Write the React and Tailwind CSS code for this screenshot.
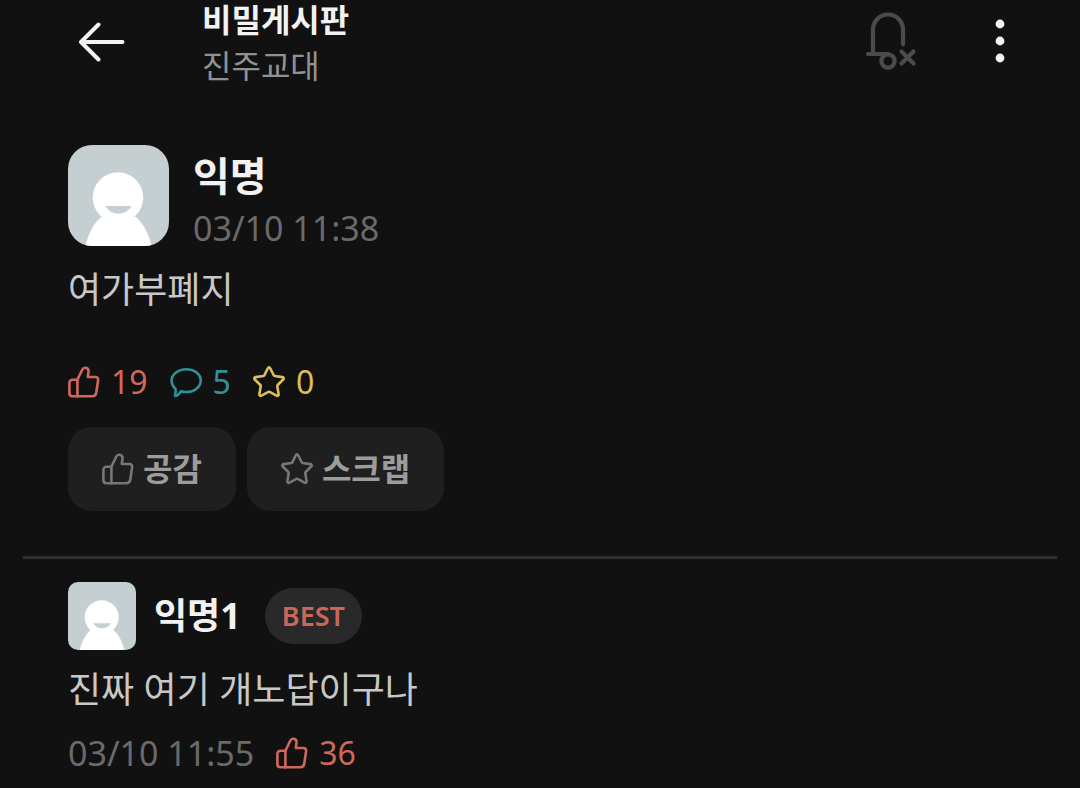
import React, { useState } from 'react';
import clsx from 'clsx';

const ThumbIcon = ({ className }) => (
  <svg viewBox="0 0 32 32" className={clsx('w-8 h-8', className)} fill="none" stroke="currentColor" strokeWidth="2.6" strokeLinejoin="round" strokeLinecap="round" aria-hidden="true">
    <path d="M9.4 13.8H4.6C2.6 13.8 1.4 15 1.4 16.8v10.4c0 1.8 1.2 3 3.2 3h4.8" />
    <path d="M9.4 13.8v16.4" />
    <path d="M9.4 13.8l4.8-10c.8-1.6 2-2.3 3.6-2 1.9.4 2.9 1.9 2.7 3.9l-.7 5.300h7.500c2 0 3.100 1.300 2.800 3.200l-1.800 12.300c-.3 2.300-1.600 3.700-4 3.700H9.400" />
  </svg>
);

const BubbleIcon = ({ className }) => (
  <svg viewBox="0 0 32 32" className={clsx('w-8 h-8', className)} fill="none" stroke="currentColor" strokeWidth="2.6" strokeLinejoin="round" aria-hidden="true">
    <path d="M16.4 3.2c8 0 14.3 4.9 14.3 11.3s-6.300 11.500-14.300 11.500c-1.900 0-3.600-.2-5.200-.8-1.500 2.500-3.500 4.300-5.400 4.700-.9.200-1.100-.5-.8-1.200.6-1.600.9-4 .5-5.900-2.300-2-3.900-4.900-3.900-8.300 0-6.400 6.800-11.300 14.800-11.300z" />
  </svg>
);

const StarIcon = ({ className }) => (
  <svg viewBox="0 0 32 32" className={clsx('w-8 h-8', className)} fill="none" stroke="currentColor" strokeWidth="2.6" strokeLinejoin="round" aria-hidden="true">
    <path d="M14.8 2.2c.5-1.1 1.9-1.1 2.4 0l3.500 7.100c.2.400.6.7 1 .7l7.700 1.100c1.300.2 1.700 1.500.8 2.400l-5.500 5.500c-.3.300-.4.700-.4 1.200l1.300 8c.2 1.200-1 2-2.100 1.400l-6.800-3.700c-.4-.2-.9-.2-1.300 0l-6.900 3.700c-1.100.6-2.300-.2-2.100-1.400l1.300-8c.1-.5-.1-.9-.4-1.200l-5.500-5.500c-.9-.9-.5-2.200.8-2.400l7.700-1.100c.4-.1.800-.3 1-.7z" />
  </svg>
);

const BackIcon = () => (
  <svg viewBox="0 0 48 40" className="w-12 h-10" fill="none" stroke="currentColor" strokeWidth="4" strokeLinecap="round" strokeLinejoin="round" aria-hidden="true">
    <path d="M20.5 2.5L3 20l17.5 17.5M3 20h41.5" />
  </svg>
);

const BellOffIcon = () => (
  <svg viewBox="0 0 52 58" className="w-[52px] h-[58px]" fill="none" stroke="currentColor" strokeWidth="4.2" strokeLinecap="round" aria-hidden="true">
    <path d="M8 42V17.5a15 15 0 0 1 30 0v15" />
    <path d="M3 42h20" />
    <circle cx="23" cy="49" r="6.6" />
    <path d="M36.5 39.5l12 12M48.5 39.5l-12 12" />
  </svg>
);

const MoreIcon = () => (
  <svg viewBox="0 0 10 44" className="w-[10px] h-11" fill="currentColor" aria-hidden="true">
    <circle cx="5" cy="5" r="4.4" />
    <circle cx="5" cy="22" r="4.4" />
    <circle cx="5" cy="39" r="4.4" />
  </svg>
);

const Avatar = ({ className }) => (
  <svg viewBox="0 0 100 100" className={clsx('shrink-0 bg-[#c5cfd2]', className)} aria-hidden="true">
    <path d="M17 101c3-13 8-23 16-30h34c8 7 13 17 16 30z" fill="#fff" />
    <circle cx="49.5" cy="52" r="25" fill="#fff" />
    <path d="M37 60.5h26c-3 5-7.5 7.5-13 7.5s-10-2.5-13-7.5z" fill="#c5cfd2" />
  </svg>
);

const Stat = ({ icon: Icon, count, label, className }) => (
  <span className={clsx('flex items-center gap-[11px] text-[32px] leading-10', className)} aria-label={label}>
    <Icon />
    {count}
  </span>
);

const ActionButton = ({ icon: Icon, active, onClick, children }) => (
  <button
    type="button"
    aria-pressed={active}
    onClick={onClick}
    className="flex items-center gap-[9px] h-[84px] px-[34px] rounded-[24px] bg-[#1f1f1f] text-[#9c9c9c] text-[32px] font-bold"
  >
    <Icon className="text-[#777777]" />
    {children}
  </button>
);

const App = () => {
  const [liked, setLiked] = useState(false);
  const [scrapped, setScrapped] = useState(false);

  return (
    <div className="min-h-screen bg-[#111111] text-[#c8c8c8] font-['Noto_Sans','Noto_Sans_CJK_KR',sans-serif]">
      <header className="flex items-start pl-[78px] pr-[75px]">
        <button type="button" aria-label="뒤로" className="mt-[22px] text-[#f2f2f2]">
          <BackIcon />
        </button>
        <div className="flex-1 ml-[76px]">
          <h1 className="text-[32px] leading-10 font-bold text-[#f2f2f2]">비밀게시판</h1>
          <p className="mt-[6px] text-[32px] leading-10 text-[#919191]">진주교대</p>
        </div>
        <button type="button" aria-label="알림 꺼짐" className="mt-3 text-[#4b4b4b]">
          <BellOffIcon />
        </button>
        <button type="button" aria-label="더보기" className="mt-[19px] ml-[78px] text-[#f2f2f2]">
          <MoreIcon />
        </button>
      </header>

      <main>
        <article className="px-[68px] pt-[50px]">
          <div className="flex items-center gap-6">
            <Avatar className="w-[101px] h-[101px] rounded-[24px]" />
            <div className="pt-[14px]">
              <h2 className="text-[40px] leading-[52px] font-bold text-[#f2f2f2]">익명</h2>
              <time className="block text-[34px] leading-[52px] text-[#6a6a6a]">03/10 11:38</time>
            </div>
          </div>
          <p className="mt-3 text-[36px] leading-[48px]">여가부폐지</p>

          <div className="flex items-center gap-[22px] mt-12">
            <Stat icon={ThumbIcon} count={19} label="공감 19" className="text-[#d0685c]" />
            <Stat icon={BubbleIcon} count={5} label="댓글 5" className="text-[#2f9299]" />
            <Stat icon={StarIcon} count={0} label="스크랩 0" className="text-[#dfbd5b]" />
          </div>

          <div className="flex gap-[11px] mt-[25px]">
            <ActionButton icon={ThumbIcon} active={liked} onClick={() => setLiked(!liked)}>공감</ActionButton>
            <ActionButton icon={StarIcon} active={scrapped} onClick={() => setScrapped(!scrapped)}>스크랩</ActionButton>
          </div>
        </article>

        <hr className="mx-[23px] mt-[45px] border-0 h-[3px] bg-[#2e2e2e]" />

        <article className="px-[68px] pt-[23px]">
          <div className="flex items-center">
            <Avatar className="w-[68px] h-[68px] rounded-[10px]" />
            <h3 className="ml-[18px] text-[36px] font-bold text-[#f2f2f2]">익명1</h3>
            <span className="flex items-center h-14 px-[17px] ml-6 rounded-full bg-[#292929] text-[27px] font-semibold text-[#c9675b]">BEST</span>
          </div>
          <p className="mt-4 text-[36px] leading-[48px]">진짜 여기 개노답이구나</p>
          <div className="flex items-center gap-[22px] mt-[19px]">
            <time className="text-[34px] leading-10 text-[#6a6a6a]">03/10 11:55</time>
            <Stat icon={ThumbIcon} count={36} label="공감 36" className="text-[#d0685c]" />
          </div>
        </article>
      </main>
    </div>
  );
};

export default App;
